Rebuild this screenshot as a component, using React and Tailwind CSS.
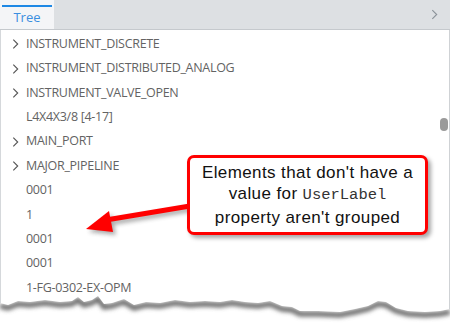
import React from "react";

const rows = [
  { label: "INSTRUMENT_DISCRETE", arrow: true },
  { label: "INSTRUMENT_DISTRIBUTED_ANALOG", arrow: true },
  { label: "INSTRUMENT_VALVE_OPEN", arrow: true },
  { label: "L4X4X3/8 [4-17]", arrow: false },
  { label: "MAIN_PORT", arrow: true },
  { label: "MAJOR_PIPELINE", arrow: true },
  { label: "0001", arrow: false },
  { label: "1", arrow: false },
  { label: "0001", arrow: false },
  { label: "0001", arrow: false },
  { label: "1-FG-0302-EX-OPM", arrow: false },
  { label: "1-FG-0302-EX-OPM-01", arrow: false },
];

function Chevron({ className }) {
  return (
    <svg className={className} viewBox="0 0 8 12" fill="none" stroke="currentColor" strokeWidth="1.3">
      <path d="M1.5 1l5 5-5 5" />
    </svg>
  );
}

const tearPath =
  "M0 303 L8 305 L18 301 L30 302 L45 300 L60 302 L72 301 L78 297 L84 302 L92 300 L98 296 L104 304 L112 303 L124 299 L134 305 L146 302 L160 303 L175 300 L190 302 L205 301 L220 302 L232 300 L245 302 L258 303 L270 301 L282 306 L292 307 L300 311 L318 311 L340 312 L355 309 L368 306 L378 301 L386 302 L396 308 L408 311 L425 312 L440 311 L450 309";

export default function App() {
  return (
    <div className="relative w-[450px] h-[323px] overflow-hidden bg-white" style={{ fontFamily: "'Open Sans', sans-serif" }}>
      {/* tab bar */}
      <div className="flex items-stretch h-[30px] bg-[#dde0e3] border-b border-[#c5c9cd]">
        <div className="w-[54px] bg-[#f4f5f7] pt-[5px] flex flex-col items-center">
          <div className="w-[50px] h-[2px] bg-[#1e88e5]" />
          <span className="text-[13px] leading-[18px] mt-[1px] text-[#3b8fe0]">Tree</span>
        </div>
        <div className="flex-1" />
        <div className="w-[19px] flex items-center text-[#8b9299]">
          <Chevron className="w-[7px] h-[13px]" />
        </div>
      </div>

      {/* tree */}
      <div className="relative flex border-l border-[#d5d8db] h-[293px]">
        <div className="flex-1 pt-[2px]">
          {rows.map((r, i) => (
            <div key={i} className="flex items-center h-[24.4px] text-[12.5px] tracking-[-0.3px] text-[#636363]">
              <span className="w-[25px] flex justify-center pl-[3px] text-[#555]">
                {r.arrow && <Chevron className="w-[7px] h-[12px]" />}
              </span>
              <span>{r.label}</span>
            </div>
          ))}
        </div>
        <div className="w-[11px] border-r border-[#cfd2d5] pt-[88px] pl-[1px]">
          <div className="w-[8px] h-[13px] rounded-full bg-[#9a9a9a]" />
        </div>
      </div>

      {/* arrow and torn edge */}
      <svg className="absolute left-0 top-0 pointer-events-none" width="450" height="323">
        <defs>
          <filter id="sh" x="-20%" y="-20%" width="140%" height="160%">
            <feGaussianBlur stdDeviation="2" />
          </filter>
          <filter id="ts" x="-5%" y="-200%" width="110%" height="500%">
            <feGaussianBlur stdDeviation="2" />
          </filter>
          <clipPath id="below">
            <path d={tearPath + " L450 323 L0 323 Z"} />
          </clipPath>
        </defs>
        <g transform="translate(3 3)" opacity="0.45" filter="url(#sh)">
          <path d="M190 206 L106 220" stroke="#444" strokeWidth="5" />
          <path d="M86 229 L109 211 L113 232 Z" fill="#444" />
        </g>
        <path d="M190 206 L106 220" stroke="#ff0000" strokeWidth="5" />
        <path d="M86 229 L109 211 L113 232 Z" fill="#ff0000" />

        <path d={tearPath + " L450 323 L0 323 Z"} fill="#ffffff" />
        <g clipPath="url(#below)">
          <path d={tearPath} transform="translate(0 3)" stroke="#666" strokeWidth="5" fill="none" filter="url(#ts)" />
        </g>
      </svg>

      {/* callout */}
      <div className="absolute left-[187px] top-[155px] w-[241px] h-[80px] border-[3px] border-[#ff0000] rounded-[7px] bg-white shadow-[3px_3px_4px_rgba(0,0,0,0.35)] flex flex-col items-center justify-center text-[17px] tracking-[0.4px] leading-[21.5px] text-[#111]" style={{ fontFamily: "'Liberation Sans', Arial, sans-serif" }}>
        <span>Elements that don't have a</span>
        <span>
          value for <span className="text-[15.5px] tracking-normal text-[#333]" style={{ fontFamily: "'Liberation Mono', monospace" }}>UserLabel</span>
        </span>
        <span>property aren't grouped</span>
      </div>
    </div>
  );
}
